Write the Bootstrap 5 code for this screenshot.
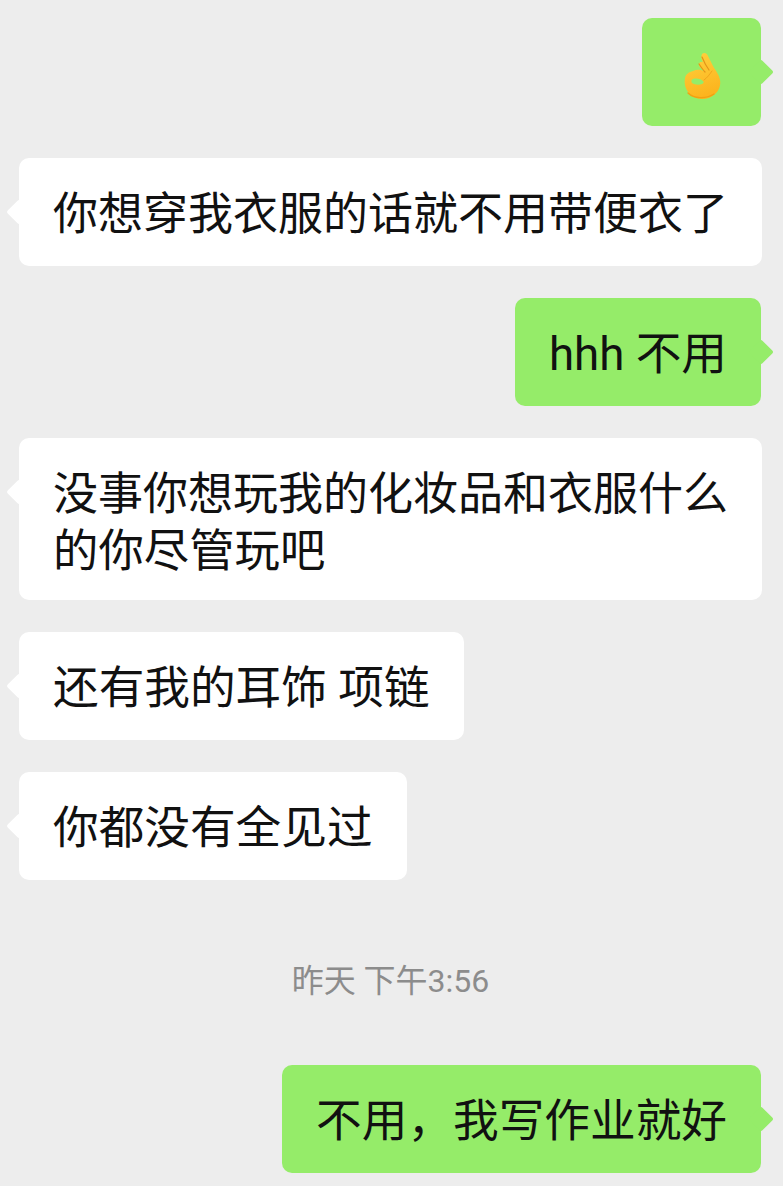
<!DOCTYPE html>
<html lang="zh-CN">
<head>
  <meta charset="UTF-8" />
  <title>Chat</title>
  <meta name="viewport" content="width=device-width, initial-scale=1">
  <link href="https://cdn.jsdelivr.net/npm/bootstrap@5.3.0/dist/css/bootstrap.min.css" rel="stylesheet">
  <style>
    body {
      background-color: #ededed;
      font-family: Roboto, "Noto Sans CJK SC", sans-serif;
      color: #111;
    }

    .chat-wrap {
      padding: 18px 21px 0 19px;
      gap: 32px;
    }

    .bubble {
      position: relative;
      max-width: 743px;
      padding: 28px 34px 23px;
      border-radius: 10px;
      font-size: 45.67px;
      line-height: 57px;
    }

    .bubble::after {
      content: '';
      position: absolute;
      top: 45px;
      width: 18px;
      height: 18px;
      border-radius: 2px;
      transform: rotate(45deg);
      background: inherit;
    }

    .bubble-in {
      background: #fff;
    }

    .bubble-in::after {
      left: -9px;
    }

    .bubble-out {
      margin-right: 1px;
      background: #95ec69;
    }

    .bubble-out::after {
      right: -9px;
    }

    /* full width bubbles: the line is squeezed a bit to fit 15 chars */
    .bubble-full {
      font-size: 45px;
    }

    .two-lines {
      padding-bottom: 20px;
    }

    .tail-line {
      font-size: 45.4px;
    }

    .emoji-box {
      width: 51px;
      height: 57px;
      margin-top: -3px;
      margin-bottom: 3px;
    }

    .time-label {
      margin: 46px 0 29px;
      font-size: 32px;
      line-height: 46px;
      color: #8c8c8c;
    }
  </style>
</head>
<body>

  <div class="chat-wrap d-flex flex-column">

    <div class="bubble bubble-out align-self-end">
      <div class="emoji-box">
        <svg width="51" height="58" viewBox="0 0 51 58">
          <defs>
            <linearGradient id="handFill" x1="0" y1="0" x2="0.3" y2="1">
              <stop offset="0" stop-color="#ffd23f"/>
              <stop offset="1" stop-color="#fcb41e"/>
            </linearGradient>
          </defs>
          <path fill-rule="evenodd" fill="url(#handFill)" d="M26 8c2-2 5-1 6 2l5 10c2 4 6 8 7 14 1 5-1 11-5 14-3 3-8 5-13 5-6 0-11-3-14-7-3-4-4-9-3-14 1-4 4-6 8-7 4-2 8-1 11 0-2-2-5-4-5-6 0-3 2-4 4-3-2-3-2-6-1-8zM17 33c-2 1-2 2-1 4 3 2 7 2 10 1 2-1 2-2 1-3-2-2-6-3-10-2z"/>
          <path d="M26 11c2 5 4 9 7 13M23 18c2 3 4 6 6 8" fill="none" stroke="#e2951a" stroke-width="1.2" stroke-linecap="round"/>
          <path d="M28 34c3-2 6-6 8-9" fill="none" stroke="#f0a51c" stroke-width="1" stroke-linecap="round"/>
          <path d="M12 47c6 6 18 6 26 1" fill="none" stroke="#f2a012" stroke-width="1.4" stroke-linecap="round"/>
        </svg>
      </div>
    </div>

    <div class="bubble bubble-in bubble-full align-self-start">你想穿我衣服的话就不用带便衣了</div>
    <div class="bubble bubble-out align-self-end">hhh 不用</div>
    <div class="bubble bubble-in bubble-full two-lines align-self-start">没事你想玩我的化妆品和衣服什么<span class="tail-line">的你尽管玩吧</span></div>
    <div class="bubble bubble-in align-self-start">还有我的耳饰 项链</div>
    <div class="bubble bubble-in align-self-start">你都没有全见过</div>

    <div class="time-label text-center">昨天 下午3:56</div>

    <div class="bubble bubble-out align-self-end">不用，我写作业就好</div>
  </div>

</body>
</html>
